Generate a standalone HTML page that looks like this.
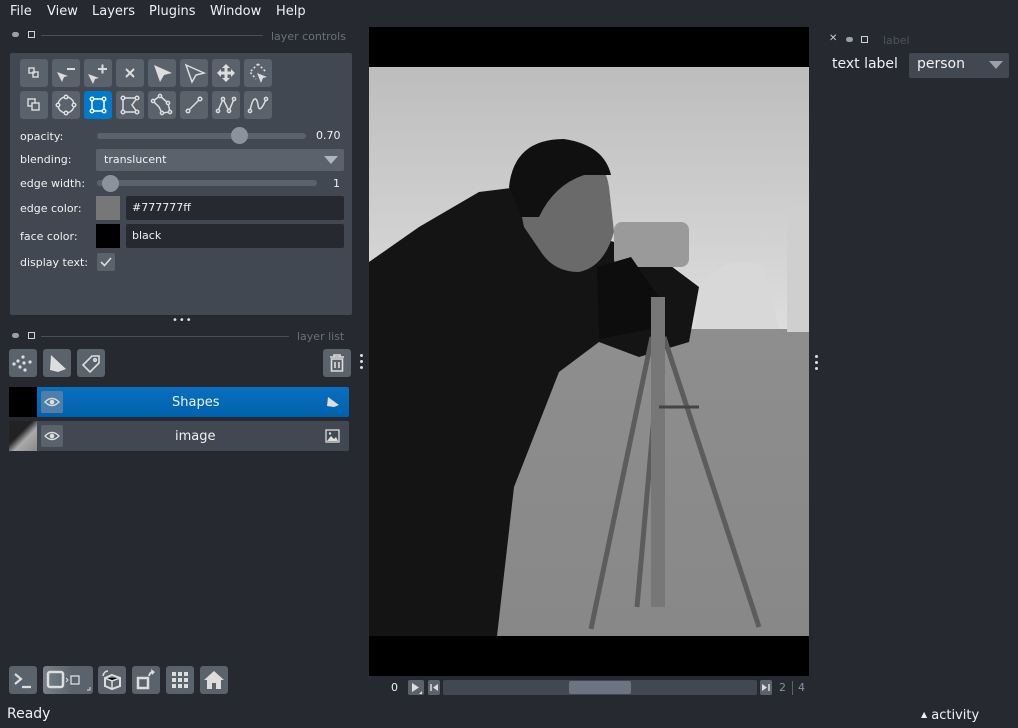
<!DOCTYPE html><html><head><style>
*{margin:0;padding:0;box-sizing:border-box}
body{width:1018px;height:728px;background:#262930;font-family:"DejaVu Sans","Liberation Sans",sans-serif;color:#f0f1f2;position:relative;overflow:hidden;font-size:11px}
.a{position:absolute}
.menu span{position:absolute;top:4px;font-size:13px;color:#f0f1f2}
.btn{position:absolute;width:28px;height:28px;background:#5a626c;border-radius:3px}
.btn svg{width:100%;height:28px;display:block}
.lbl{position:absolute;left:20px;font-size:11px;color:#f0f1f2}
.box{position:absolute;background:#262930;border-radius:2px;font-size:11px;padding:7px 6px}
.hdr{color:#6b7079;font-size:11px}
</style></head><body>
<div class="menu">
<span style="left:10px">File</span><span style="left:47px">View</span><span style="left:92px">Layers</span><span style="left:149px">Plugins</span><span style="left:210px">Window</span><span style="left:276px">Help</span>
</div>
<div class="a" style="left:12px;top:32px;width:7px;height:5px;background:#9aa0a8;border-radius:3px"></div>
<div class="a" style="left:28px;top:31px;width:7px;height:7px;border:1.5px solid #cfd2d6"></div>
<div class="a" style="left:41px;top:35px;width:222px;height:1px;background:#4a4f58"></div>
<div class="a hdr" style="left:271px;top:30px">layer controls</div>
<div class="a" style="left:10px;top:53px;width:342px;height:262px;background:#414851;border-radius:2px"></div>
<div class="btn" style="left:20px;top:59px"><svg viewBox="0 0 28 28" fill="none" stroke="#ddd" stroke-width="1.4"><rect x="9" y="9" width="5" height="5"/><rect x="13" y="13" width="5" height="5"/></svg></div>
<div class="btn" style="left:52px;top:59px"><svg viewBox="0 0 28 28"><path d="M5 13 L16 17 L12 18 L10 23Z" fill="#ddd"/><path d="M15 10 H23" stroke="#ddd" stroke-width="2"/></svg></div>
<div class="btn" style="left:84px;top:59px"><svg viewBox="0 0 28 28"><path d="M4 15 L15 19 L11 20 L9 25Z" fill="#ddd"/><path d="M14 10 H23 M18.5 5.5 V14.5" stroke="#ddd" stroke-width="2"/></svg></div>
<div class="btn" style="left:116px;top:59px"><svg viewBox="0 0 28 28"><path d="M10 10 L18 18 M18 10 L10 18" stroke="#ddd" stroke-width="2"/></svg></div>
<div class="btn" style="left:148px;top:59px"><svg viewBox="0 0 28 28"><path d="M6 6 L24 14 L16 16 L12 23Z" fill="#ddd"/></svg></div>
<div class="btn" style="left:180px;top:59px"><svg viewBox="0 0 28 28"><path d="M6 6 L24 14 L16 16 L12 23Z" fill="none" stroke="#ddd" stroke-width="1.5"/></svg></div>
<div class="btn" style="left:212px;top:59px"><svg viewBox="0 0 28 28"><path d="M14 5 L18 9 H15.5 V12.5 H19 V10 L23 14 L19 18 V15.5 H15.5 V19 H18 L14 23 L10 19 H12.5 V15.5 H9 V18 L5 14 L9 10 V12.5 H12.5 V9 H10Z" fill="#ddd"/></svg></div>
<div class="btn" style="left:244px;top:59px"><svg viewBox="0 0 28 28"><path d="M14 5 L22 13 M14 5 L6 13 L12 20" stroke="#ddd" stroke-width="1.6" stroke-dasharray="2 2" fill="none"/><path d="M13 14 L23 18 L19 19 L17 24Z" fill="#ddd"/></svg></div>
<div class="btn" style="left:20px;top:91px"><svg viewBox="0 0 28 28" fill="#5a626c" stroke="#ddd" stroke-width="1.4"><rect x="8" y="8" width="7" height="7"/><rect x="12" y="12" width="7" height="7"/></svg></div>
<div class="btn" style="left:52px;top:91px"><svg viewBox="0 0 28 28" fill="none" stroke="#ddd" stroke-width="1.5"><circle cx="14" cy="14" r="8"/><circle cx="14" cy="6" r="1.8" fill="#5a626c"/><circle cx="14" cy="22" r="1.8" fill="#5a626c"/><circle cx="6" cy="14" r="1.8" fill="#5a626c"/><circle cx="22" cy="14" r="1.8" fill="#5a626c"/></svg></div>
<div class="btn" style="left:84px;top:91px;background:#007acc"><svg viewBox="0 0 28 28" fill="none" stroke="#fff" stroke-width="1.5"><rect x="8" y="8" width="12" height="12"/><circle cx="8" cy="8" r="1.8" fill="#007acc"/><circle cx="20" cy="8" r="1.8" fill="#007acc"/><circle cx="8" cy="20" r="1.8" fill="#007acc"/><circle cx="20" cy="20" r="1.8" fill="#007acc"/></svg></div>
<div class="btn" style="left:116px;top:91px"><svg viewBox="0 0 28 28" fill="none" stroke="#ddd" stroke-width="1.5"><path d="M7 7 H21 L16 14 L21 21 H7Z"/><circle cx="7" cy="7" r="1.8" fill="#5a626c"/><circle cx="21" cy="7" r="1.8" fill="#5a626c"/><circle cx="7" cy="21" r="1.8" fill="#5a626c"/><circle cx="21" cy="21" r="1.8" fill="#5a626c"/></svg></div>
<div class="btn" style="left:148px;top:91px"><svg viewBox="0 0 28 28" fill="none" stroke="#ddd" stroke-width="1.5"><path d="M12 5 L20 12 L22 21 L14 22 L11 16 L5 10Z"/><circle cx="12" cy="5" r="1.6" fill="#5a626c"/><circle cx="20" cy="12" r="1.6" fill="#5a626c"/><circle cx="22" cy="21" r="1.6" fill="#5a626c"/><circle cx="14" cy="22" r="1.6" fill="#5a626c"/><circle cx="5" cy="10" r="1.6" fill="#5a626c"/></svg></div>
<div class="btn" style="left:180px;top:91px"><svg viewBox="0 0 28 28" fill="none" stroke="#ddd" stroke-width="1.5"><path d="M8 20 L20 8"/><circle cx="8" cy="20" r="1.8" fill="#5a626c"/><circle cx="20" cy="8" r="1.8" fill="#5a626c"/></svg></div>
<div class="btn" style="left:212px;top:91px"><svg viewBox="0 0 28 28" fill="none" stroke="#ddd" stroke-width="1.5"><path d="M6 20 L11 8 L17 20 L22 8"/><circle cx="6" cy="20" r="1.6" fill="#5a626c"/><circle cx="11" cy="8" r="1.6" fill="#5a626c"/><circle cx="17" cy="20" r="1.6" fill="#5a626c"/><circle cx="22" cy="8" r="1.6" fill="#5a626c"/></svg></div>
<div class="btn" style="left:244px;top:91px"><svg viewBox="0 0 28 28" fill="none" stroke="#ddd" stroke-width="1.5"><path d="M6 20 C9 4 13 6 14 14 C15 22 19 16 22 8"/><circle cx="6" cy="20" r="1.6" fill="#5a626c"/><circle cx="22" cy="8" r="1.6" fill="#5a626c"/></svg></div>
<div class="lbl" style="top:130px">opacity:</div>
<div class="a" style="left:97px;top:133px;width:209px;height:6px;background:#5a626c;border-radius:3px"></div>
<div class="a" style="left:231px;top:127px;width:17px;height:17px;background:#8b929b;border-radius:50%"></div>
<div class="a" style="left:316px;top:129px">0.70</div>
<div class="lbl" style="top:153px">blending:</div>
<div class="a" style="left:96px;top:149px;width:248px;height:22px;background:#5a626c;border-radius:2px;padding:4px 8px">translucent</div>
<div class="a" style="left:324px;top:156px;border-left:7px solid transparent;border-right:7px solid transparent;border-top:8px solid #b0b5bc"></div>
<div class="lbl" style="top:177px">edge width:</div>
<div class="a" style="left:97px;top:180px;width:220px;height:6px;background:#5a626c;border-radius:3px"></div>
<div class="a" style="left:102px;top:175px;width:17px;height:17px;background:#8b929b;border-radius:50%"></div>
<div class="a" style="left:333px;top:177px">1</div>
<div class="lbl" style="top:202px">edge color:</div>
<div class="a" style="left:96px;top:196px;width:24px;height:24px;background:#777"></div>
<div class="box" style="left:126px;top:196px;width:218px;height:24px;padding:5px 6px">#777777ff</div>
<div class="lbl" style="top:230px">face color:</div>
<div class="a" style="left:96px;top:224px;width:24px;height:24px;background:#000"></div>
<div class="box" style="left:126px;top:224px;width:218px;height:24px;padding:5px 6px">black</div>
<div class="lbl" style="top:256px">display text:</div>
<div class="a" style="left:97px;top:253px;width:18px;height:18px;background:#5a626c;border-radius:2px"><svg viewBox="0 0 18 18" width="18" height="18"><path d="M4 9 L7.5 12.5 L14 5" stroke="#ddd" stroke-width="1.6" fill="none"/></svg></div>
<div class="a" style="left:172px;top:319px;color:#ddd;font-size:10px;letter-spacing:1px;line-height:4px">•••</div>
<div class="a" style="left:12px;top:333px;width:7px;height:5px;background:#9aa0a8;border-radius:3px"></div>
<div class="a" style="left:28px;top:332px;width:7px;height:7px;border:1.5px solid #cfd2d6"></div>
<div class="a" style="left:41px;top:336px;width:248px;height:1px;background:#4a4f58"></div>
<div class="a hdr" style="left:297px;top:330px">layer list</div>
<div class="btn" style="left:9px;top:349px"><svg viewBox="0 0 28 28" fill="#ddd"><circle cx="14" cy="8" r="1.6"/><circle cx="9" cy="12" r="1.6"/><circle cx="5" cy="15" r="1.6"/><circle cx="15" cy="14" r="1.6"/><circle cx="21" cy="13" r="1.6"/><circle cx="11" cy="18" r="1.6"/><circle cx="16" cy="21" r="1.6"/></svg></div>
<div class="btn" style="left:43px;top:349px"><svg viewBox="0 0 28 28"><path d="M8 6 L23 20 L15 23 L7 21Z" fill="#ddd"/></svg></div>
<div class="btn" style="left:77px;top:349px"><svg viewBox="0 0 28 28" fill="none" stroke="#ddd" stroke-width="1.6"><path d="M6 16 L15 7 H22 V14 L13 23Z"/><circle cx="18" cy="11" r="1.3"/></svg></div>
<div class="btn" style="left:323px;top:349px"><svg viewBox="0 0 28 28" fill="none" stroke="#ddd" stroke-width="1.6"><path d="M7 8 H21 M11 8 V6 H17 V8 M8.5 10 H19.5 V22 H8.5Z M12 13 V19 M16 13 V19"/></svg></div>
<div class="a" style="left:360px;top:354px;width:3px;height:3px;background:#ddd;border-radius:50%;box-shadow:0 6px #ddd,0 12px #ddd"></div>
<div class="a" style="left:9px;top:387px;width:28px;height:30px;background:#000"></div>
<div class="a" style="left:37px;top:387px;width:312px;height:30px;background:linear-gradient(#0a6fbf,#0062ad);border-radius:0 2px 2px 0"></div>
<div class="a" style="left:41px;top:391px;width:22px;height:22px;background:#4f7ea8;border-radius:2px"></div>
<svg class="a" style="left:43px;top:395px" width="18" height="14" viewBox="0 0 18 14"><path d="M2 7 Q9 0 16 7 Q9 14 2 7Z" fill="none" stroke="#ddd" stroke-width="1.3"/><circle cx="9" cy="7" r="2.3" fill="#ddd"/></svg>
<div class="a" style="left:172px;top:395px;font-size:13px">Shapes</div>
<svg class="a" style="left:326px;top:396px" width="14" height="12"><path d="M2 1 L13 9 L8 11 L1 10Z" fill="#ddd"/></svg>
<div class="a" style="left:9px;top:421px;width:28px;height:30px;background:linear-gradient(135deg,#222 40%,#aaa 60%,#888)"></div>
<div class="a" style="left:37px;top:421px;width:312px;height:30px;background:#414851;border-radius:0 2px 2px 0"></div>
<div class="a" style="left:41px;top:425px;width:22px;height:22px;background:#5a626c;border-radius:2px"></div>
<svg class="a" style="left:43px;top:429px" width="18" height="14" viewBox="0 0 18 14"><path d="M2 7 Q9 0 16 7 Q9 14 2 7Z" fill="none" stroke="#ddd" stroke-width="1.3"/><circle cx="9" cy="7" r="2.3" fill="#ddd"/></svg>
<div class="a" style="left:175px;top:429px;font-size:13px">image</div>
<svg class="a" style="left:325px;top:429px" width="15" height="14"><rect x="1" y="1" width="13" height="12" fill="none" stroke="#ddd" stroke-width="1.3"/><path d="M2 12 L6 7 L9 10 L11 8 L13 12Z" fill="#ddd"/><circle cx="5" cy="4.5" r="1.2" fill="#ddd"/></svg>
<div class="btn" style="left:9px;top:666px"><svg viewBox="0 0 28 28" fill="none" stroke="#ddd" stroke-width="2.2"><path d="M6 8 L12 13 L6 18 M13 21 H22"/></svg></div>
<div class="btn" style="left:43px;top:666px;width:50px;background:linear-gradient(90deg,#78808a,#5a626c 60%)"><svg viewBox="0 0 50 28" width="50" fill="none" stroke="#ddd" stroke-width="2"><rect x="5" y="6" width="15" height="15" rx="2" stroke-width="2.5"/><path d="M23 12 L25 14 L23 16" stroke-width="1"/><rect x="28" y="10" width="8" height="8" stroke-width="1.3"/><path d="M44 24 H47 V21" stroke-width="1"/></svg></div>
<div class="btn" style="left:98px;top:666px"><svg viewBox="0 0 28 28"><path d="M14 9 L22 12 V20 L14 23 L7 20 V12Z" fill="none" stroke="#ddd" stroke-width="2"/><path d="M7 12 L14 15 L22 12 M14 15 V23" stroke="#ddd" stroke-width="1.5"/><path d="M5 10 Q6 5 10 5" stroke="#ddd" stroke-width="1.5" fill="none"/></svg></div>
<div class="btn" style="left:132px;top:666px"><svg viewBox="0 0 28 28"><rect x="6" y="12" width="10" height="10" fill="none" stroke="#ddd" stroke-width="2.5"/><path d="M17 10 Q18 6 21 6" stroke="#ddd" stroke-width="2" fill="none"/><path d="M19 3 L23 6 L20 9Z" fill="#ddd"/></svg></div>
<div class="btn" style="left:166px;top:666px"><svg viewBox="0 0 28 28" fill="#ddd"><rect x="6" y="6" width="4" height="4"/><rect x="12" y="6" width="4" height="4"/><rect x="18" y="6" width="4" height="4"/><rect x="6" y="12" width="4" height="4"/><rect x="12" y="12" width="4" height="4"/><rect x="18" y="12" width="4" height="4"/><rect x="6" y="18" width="4" height="4"/><rect x="12" y="18" width="4" height="4"/><rect x="18" y="18" width="4" height="4"/></svg></div>
<div class="btn" style="left:200px;top:666px"><svg viewBox="0 0 28 28"><path d="M14 5 L24 14 H21 V23 H16 V17 H12 V23 H7 V14 H4Z" fill="#ddd"/></svg></div>
<div class="a" style="left:7px;top:706px;font-size:14px">Ready</div>
<div class="a" style="left:369px;top:27px;width:440px;height:649px;background:#000"></div>
<svg class="a" style="left:369px;top:67px" width="440" height="569" viewBox="0 0 440 569">
<defs><linearGradient id="sky" x1="0" y1="0" x2="0" y2="1"><stop offset="0" stop-color="#bdbdbd"/><stop offset="1" stop-color="#dedede"/></linearGradient>
<linearGradient id="gr" x1="0" y1="0" x2="0" y2="1"><stop offset="0" stop-color="#8e8e8e"/><stop offset="1" stop-color="#888"/></linearGradient></defs>
<rect width="440" height="270" fill="url(#sky)"/>
<rect y="262" width="440" height="307" fill="url(#gr)"/>
<path d="M335 215 Q360 185 395 200 L410 262 L325 262Z" fill="#d8d8d8"/>
<rect x="418" y="140" width="22" height="125" fill="#cfcfcf"/>
<path d="M0 195 L50 160 L110 125 L150 120 L170 135 L195 165 L230 170 L290 190 L330 220 L320 275 L270 290 L230 275 L190 305 L145 420 L128 569 L0 569Z" fill="#141414"/>
<path d="M145 110 Q150 75 195 78 Q235 85 240 120 L245 165 Q235 200 210 205 Q185 205 172 185 L155 160Z" fill="#6a6a6a"/>
<path d="M140 120 Q145 72 195 72 Q235 78 242 108 L215 108 Q185 118 170 150 L152 150Z" fill="#101010"/>
<rect x="245" y="155" width="75" height="45" rx="8" fill="#9a9a9a"/>
<path d="M228 200 L262 190 L290 230 L282 262 L230 272Z" fill="#0d0d0d"/>
<path d="M283 270 L222 562 M292 270 L268 540 M295 270 L390 560" stroke="#5c5c5c" stroke-width="5" fill="none"/>
<path d="M282 230 L296 230 L296 540 L282 540Z" fill="#777"/>
<path d="M290 340 L330 340" stroke="#444" stroke-width="3"/>
</svg>
<div class="a" style="left:391px;top:681px;color:#f0f1f2">0</div>
<div class="a" style="left:408px;top:680px;width:16px;height:15px;background:#5a626c;border-radius:2px"><svg width="16" height="15"><path d="M4 3 L11 7.5 L4 12Z" fill="#ddd"/><path d="M14 11 V14 H11Z" fill="#ddd"/></svg></div>
<div class="a" style="left:428px;top:680px;width:12px;height:15px;background:#5a626c;border-radius:2px"><svg width="12" height="15"><path d="M3 4 V11" stroke="#ddd" stroke-width="1.5"/><path d="M10 4 L5 7.5 L10 11Z" fill="#ddd"/></svg></div>
<div class="a" style="left:443px;top:680px;width:314px;height:15px;background:#414851;border-radius:2px"></div>
<div class="a" style="left:569px;top:681px;width:62px;height:13px;background:#6b7480;border-radius:2px"></div>
<div class="a" style="left:760px;top:680px;width:12px;height:15px;background:#5a626c;border-radius:2px"><svg width="12" height="15"><path d="M2 4 L7 7.5 L2 11Z" fill="#ddd"/><path d="M9 4 V11" stroke="#ddd" stroke-width="1.5"/></svg></div>
<div class="a" style="left:779px;top:681px;color:#8a8f96">2</div>
<div class="a" style="left:792px;top:681px;width:1px;height:14px;background:#5a626c"></div>
<div class="a" style="left:798px;top:681px;color:#8a8f96">4</div>
<div class="a" style="left:815px;top:355px;width:3px;height:3px;background:#ddd;border-radius:50%;box-shadow:0 6px #ddd,0 12px #ddd"></div>
<div class="a" style="left:829px;top:33px;color:#ccc;font-size:10px">✕</div>
<div class="a" style="left:846px;top:37px;width:7px;height:5px;background:#9aa0a8;border-radius:3px"></div>
<div class="a" style="left:861px;top:36px;width:7px;height:7px;border:1.5px solid #cfd2d6"></div>
<div class="a hdr" style="left:883px;top:34px;color:#4f545c">label</div>
<div class="a" style="left:832px;top:56px;font-size:14px">text label</div>
<div class="a" style="left:909px;top:53px;width:100px;height:25px;background:#414851;border-radius:2px;padding:3px 8px;font-size:14px">person</div>
<div class="a" style="left:989px;top:61px;border-left:7px solid transparent;border-right:7px solid transparent;border-top:8px solid #9aa0a8"></div>
<div class="a" style="left:921px;top:708px;font-size:13px"><span style="font-size:8px;vertical-align:2px">▲</span> activity</div>
</body></html>
